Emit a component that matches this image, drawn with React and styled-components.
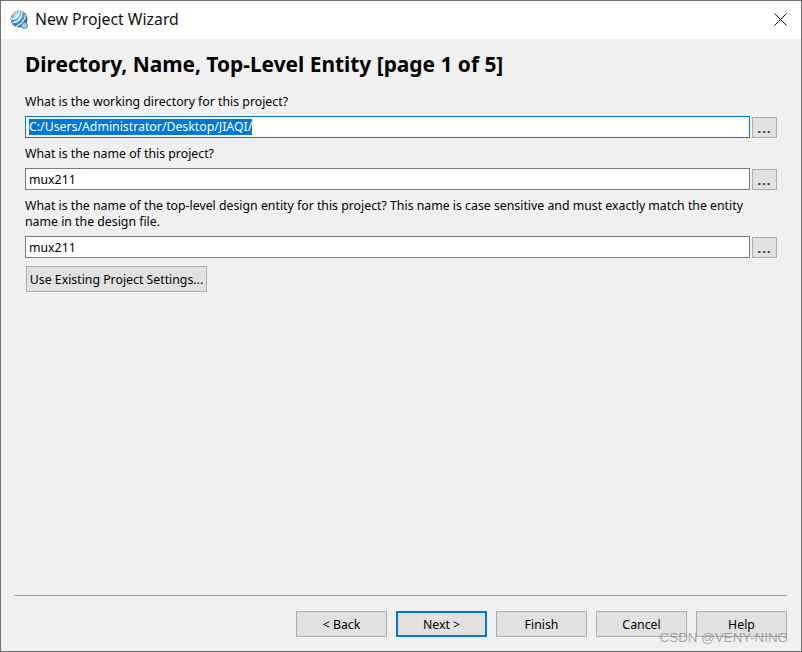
import React from 'react';
import styled, { createGlobalStyle } from 'styled-components';

const GlobalStyle = createGlobalStyle`
  html, body {
    margin: 0;
    padding: 0;
    background: #f0f0f0;
  }
`;

const FIELDS = [
  { label: 'What is the working directory for this project?', value: 'C:/Users/Administrator/Desktop/JIAQI/', active: true },
  { label: 'What is the name of this project?', value: 'mux211' },
  {
    label:
      'What is the name of the top-level design entity for this project? This name is case sensitive and must exactly match the entity name in the design file.',
    value: 'mux211',
  },
];

const BUTTONS = ['< Back', 'Next >', 'Finish', 'Cancel', 'Help'];

function AppLogo() {
  return (
    <svg width="19" height="20" viewBox="0 0 19 20">
      <defs>
        <radialGradient id="globe" cx="35%" cy="25%" r="85%">
          <stop offset="0" stopColor="#d3e6f4" />
          <stop offset="0.5" stopColor="#4f94c8" />
          <stop offset="1" stopColor="#1c5a90" />
        </radialGradient>
      </defs>
      <circle cx="9" cy="9" r="8.500" fill="url(#globe)" />
      <path d="M2.500 12.500 C7 13 12 9 12 1.500 M1 9 C5 9.500 9 6.500 9.500 1 M6 16.500 C10 15 15 11 15.500 5" fill="none" stroke="#fff" strokeWidth="1.100" />
      <circle cx="14.500" cy="15.500" r="3" fill="#a8cde6" stroke="#2c6a9c" strokeWidth="0.800" />
    </svg>
  );
}

function CloseIcon() {
  return (
    <svg width="13" height="13" viewBox="0 0 13 13">
      <path d="M0.500 0.500 L12.500 12.500 M12.500 0.500 L0.500 12.500" stroke="#111" strokeWidth="1" />
    </svg>
  );
}

export default function App() {
  return (
    <Window>
      <GlobalStyle />
      <TitleBar>
        <AppLogo />
        <TitleText>New Project Wizard</TitleText>
        <CloseButton>
          <CloseIcon />
        </CloseButton>
      </TitleBar>
      <Body>
        <Heading>Directory, Name, Top-Level Entity [page 1 of 5]</Heading>
        {FIELDS.map((field) => (
          <Field key={field.value + field.label.length}>
            <Label>{field.label}</Label>
            <InputRow>
              <Input $active={field.active}>
                {field.active ? <Selected>{field.value}</Selected> : field.value}
              </Input>
              <BrowseButton>...</BrowseButton>
            </InputRow>
          </Field>
        ))}
        <SettingsButton>Use Existing Project Settings...</SettingsButton>
        <Spacer />
        <Separator />
        <Footer>
          {BUTTONS.map((text) => (
            <FooterButton key={text} $focused={text === 'Next >'}>
              {text}
            </FooterButton>
          ))}
        </Footer>
      </Body>
      <Watermark>CSDN @VENY-NING</Watermark>
    </Window>
  );
}

const Window = styled.div`
  position: relative;
  box-sizing: border-box;
  width: 802px;
  height: 652px;
  display: flex;
  flex-direction: column;
  overflow: hidden;
  background: #f0f0f0;
  border: 1px solid #6f6f6f;
  font-family: 'Noto Sans', 'Liberation Sans', sans-serif;
  color: #000;
`;

const TitleBar = styled.div`
  height: 37px;
  flex: none;
  display: flex;
  align-items: center;
  padding: 0 14px 1px 9px;
  background: #fff;
`;

const TitleText = styled.span`
  margin: 0 0 1px 6px;
  font-size: 15.800px;
  line-height: 20px;
  color: #111;
`;

const CloseButton = styled.div`
  margin-left: auto;
  display: flex;
`;

const Body = styled.div`
  flex: 1;
  display: flex;
  flex-direction: column;
  padding: 0 14px 14px 13px;
`;

const Heading = styled.h1`
  margin: 11px 0 0 11px;
  font-size: 20.900px;
  line-height: 28px;
  font-weight: 700;
  white-space: nowrap;
`;

const Field = styled.div`
  margin-left: 11px;
  margin-top: 7px;
  &:first-of-type {
    margin-top: 15px;
  }
`;

const Label = styled.div`
  width: 735px;
  padding-top: 1px;
  font-size: 12.300px;
  line-height: 16px;
  margin-bottom: 6px;
`;

const InputRow = styled.div`
  display: flex;
  align-items: center;
  gap: 2px;
`;

const Input = styled.div`
  box-sizing: border-box;
  width: 725px;
  height: 22px;
  padding: 0 3px;
  display: flex;
  align-items: center;
  background: #fff;
  border: 1px solid ${(p) => (p.$active ? '#0078d7' : '#7a7a7a')};
  font-size: 12.300px;
  white-space: nowrap;
`;

const Selected = styled.span`
  background: #0078d7;
  color: #fff;
  line-height: 16px;
`;

const BrowseButton = styled.div`
  box-sizing: border-box;
  width: 25px;
  height: 21px;
  padding-top: 2px;
  display: flex;
  align-items: center;
  justify-content: center;
  background: #e1e1e1;
  border: 1px solid #adadad;
  font-size: 13px;
  font-weight: 700;
  letter-spacing: 1px;
  color: #3a2a1a;
`;

const SettingsButton = styled.div`
  box-sizing: border-box;
  width: 181px;
  height: 26px;
  margin: 8px 0 0 12px;
  display: flex;
  align-items: center;
  justify-content: center;
  background: #e1e1e1;
  border: 1px solid #adadad;
  font-size: 12.300px;
  white-space: nowrap;
`;

const Spacer = styled.div`
  flex: 1;
`;

const Separator = styled.div`
  height: 1px;
  background: #a0a0a0;
`;

const Footer = styled.div`
  display: flex;
  justify-content: flex-end;
  gap: 9px;
  margin-top: 15px;
`;

const FooterButton = styled.div`
  box-sizing: border-box;
  width: 91px;
  height: 26px;
  display: flex;
  align-items: center;
  justify-content: center;
  background: #e1e1e1;
  border: ${(p) => (p.$focused ? '2px solid #0078d7' : '1px solid #adadad')};
  font-size: 12.300px;
`;

const Watermark = styled.div`
  position: absolute;
  right: 13px;
  bottom: 5px;
  font-family: 'Liberation Sans', sans-serif;
  font-size: 13.400px;
  line-height: 16px;
  color: rgba(120, 120, 120, 0.65);
  white-space: nowrap;
`;
